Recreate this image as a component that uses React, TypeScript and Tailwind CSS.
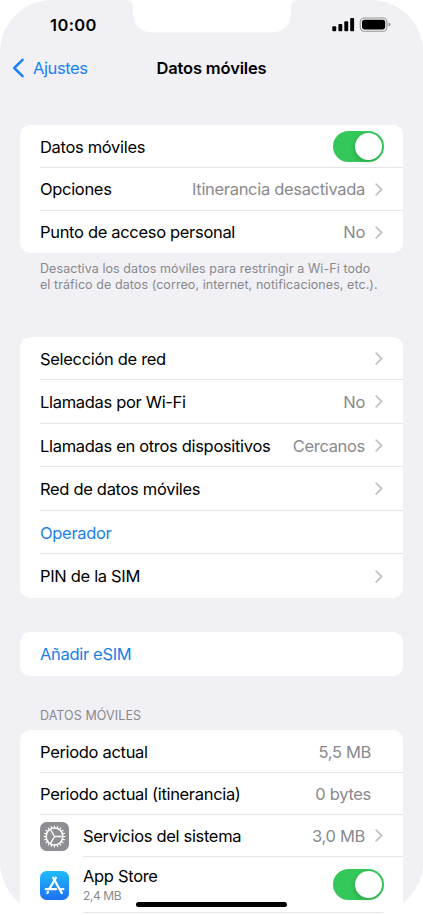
import type { ReactNode } from 'react';

function Chevron() {
  return (
    <svg width="8" height="13" viewBox="0 0 8 13" fill="none" className="ml-[10px] shrink-0">
      <path d="M1.2 1.2L6.6 6.5L1.2 11.8" stroke="#c4c4c7" strokeWidth="1.8" strokeLinecap="round" strokeLinejoin="round" />
    </svg>
  );
}

function Toggle() {
  return (
    <div className="flex h-[31px] w-[51px] shrink-0 items-center justify-end rounded-full bg-[#34c759] pr-[2px]">
      <div className="size-[27px] rounded-full bg-white shadow-[-1px_2px_4px_rgba(0,0,0,0.15)]" />
    </div>
  );
}

type RowProps = {
  label: string;
  value?: string;
  chevron?: boolean;
  link?: boolean;
  className?: string;
  children?: ReactNode;
};

function Row({ label, value, chevron, link, className = 'ml-5 h-[43px] border-b pr-5', children }: RowProps) {
  return (
    <div className={`flex items-center border-[#e6e6e8] ${className}`}>
      <span className={`grow whitespace-nowrap ${link ? 'text-[#1a7fe8]' : 'text-black'}`}>{label}</span>
      {value && <span className="whitespace-nowrap text-[#8a8a8e]">{value}</span>}
      {chevron && <Chevron />}
      {children}
    </div>
  );
}

function SettingsIcon() {
  const teeth = Array.from({ length: 20 }, (_, i) => i * 18);
  return (
    <svg width="29" height="29" viewBox="0 0 29 29" className="shrink-0">
      <rect width="29" height="29" rx="6.5" fill="#8e8e93" />
      <g stroke="#fff" fill="none" strokeLinecap="round">
        <circle cx="14.5" cy="14.5" r="8.4" strokeWidth="1.5" />
        {teeth.map((a) => (
          <path key={a} d="M14.5 5.6V4" strokeWidth="1.2" transform={`rotate(${a} 14.5 14.5)`} />
        ))}
        <path d="M14.5 14.5H22.6M14.5 14.5L10.4 7.4M14.5 14.5L10.4 21.6" strokeWidth="1.3" />
      </g>
    </svg>
  );
}

function AppStoreIcon() {
  return (
    <svg width="29" height="29" viewBox="0 0 29 29" className="shrink-0">
      <defs>
        <linearGradient id="store" x1="0" y1="0" x2="0" y2="1">
          <stop offset="0" stopColor="#1fbcfc" />
          <stop offset="1" stopColor="#1d6ff0" />
        </linearGradient>
      </defs>
      <rect width="29" height="29" rx="6.5" fill="url(#store)" />
      <g stroke="#fff" strokeWidth="2.3" strokeLinecap="round" fill="none">
        <path d="M15.8 6.8L9.3 18" />
        <path d="M13.2 6.8L21.7 22" />
        <path d="M5.8 18.2H16" />
        <path d="M20.3 18.2H23.3" />
        <path d="M8 21L7.4 22" />
      </g>
    </svg>
  );
}

export default function App() {
  return (
    <div className="relative h-[915px] w-[423px] overflow-hidden bg-white font-['Inter',sans-serif] text-[16.5px] leading-5 tracking-[-0.32px]">
      <div className="flex h-[914px] flex-col overflow-hidden rounded-[52px] bg-[#f1f0f5]">

        {/* Status bar */}
        <div className="flex h-[50px] shrink-0 items-center pr-8 pl-[50px]">
          <span className="grow font-semibold tracking-[0.4px]">10:00</span>
          <svg width="60" height="16" viewBox="0 0 60 16">
            <rect x="1.3" y="9.3" width="3.9" height="5" rx="1" />
            <rect x="7.4" y="7" width="3.9" height="7.3" rx="1" />
            <rect x="13.3" y="4.2" width="3.9" height="10.1" rx="1" />
            <rect x="19.2" y="1" width="3.9" height="13.3" rx="1" />
            <rect x="29.3" y="1" width="26.6" height="13.2" rx="4" fill="none" stroke="#97979a" strokeWidth="1.1" />
            <rect x="31" y="2.7" width="23.2" height="9.8" rx="2.4" />
            <path d="M57.5 5.6Q59.5 6 59.5 7.6Q59.5 9.2 57.5 9.6Z" fill="#97979a" />
          </svg>
        </div>

        {/* Navigation bar */}
        <div className="grid h-9 shrink-0 grid-cols-[1fr_auto_1fr] items-center">
          <div className="flex items-center text-[#1a82f7]">
            <svg width="14" height="20" viewBox="0 0 14 20" fill="none" className="ml-3">
              <path d="M10.6 1.9L2.2 10L10.6 18.1" stroke="currentColor" strokeWidth="2.5" strokeLinecap="round" strokeLinejoin="round" />
            </svg>
            <span className="ml-[7px] tracking-[-0.4px]">Ajustes</span>
          </div>
          <h1 className="font-semibold tracking-[-0.16px]">Datos móviles</h1>
        </div>

        {/* Mobile data */}
        <div className="mx-5 mt-[39px] h-[128px] shrink-0 rounded-[10px] bg-white">
          <Row label="Datos móviles" className="ml-5 h-[43px] border-b pt-px pr-[19px]">
            <Toggle />
          </Row>
          <Row label="Opciones" value="Itinerancia desactivada" chevron />
          <Row label="Punto de acceso personal" value="No" chevron className="ml-5 h-[42px] pr-5" />
        </div>
        <p className="mx-10 mt-2 h-8 shrink-0 text-[12.5px] leading-4 tracking-[0.075px] whitespace-nowrap text-[#88888d]">
          Desactiva los datos móviles para restringir a Wi-Fi todo
          <br />
          el tráfico de datos (correo, internet, notificaciones, etc.).
        </p>

        {/* Network */}
        <div className="mx-5 mt-11 h-[261px] shrink-0 rounded-[10px] bg-white">
          <Row label="Selección de red" chevron className="ml-5 h-[43px] border-b pt-px pr-5" />
          <Row label="Llamadas por Wi-Fi" value="No" chevron className="ml-5 h-11 border-b pr-5" />
          <Row label="Llamadas en otros dispositivos" value="Cercanos" chevron className="ml-5 h-[43px] border-b pt-px pr-5" />
          <Row label="Red de datos móviles" chevron className="ml-5 h-11 border-b pr-5" />
          <Row label="Operador" link className="ml-5 h-[43px] border-b pt-px pr-5" />
          <Row label="PIN de la SIM" chevron className="ml-5 h-11 pr-5" />
        </div>

        <div className="mx-5 mt-[34px] h-11 shrink-0 rounded-[10px] bg-white">
          <Row label="Añadir eSIM" link className="ml-5 h-11 pr-5" />
        </div>

        {/* Usage */}
        <h2 className="mx-10 mt-8 h-4 shrink-0 text-[12.5px] leading-4 tracking-[0.09px] text-[#88888d]">DATOS MÓVILES</h2>
        <div className="mx-5 mt-[6px] h-[200px] shrink-0 rounded-t-[10px] bg-white">
          <Row label="Periodo actual" value="5,5 MB" className="ml-5 h-[43px] border-b pt-px pr-8" />
          <Row label="Periodo actual (itinerancia)" value="0 bytes" className="ml-5 h-[42px] border-b pr-8" />
          <div className="ml-5 flex h-[42px] items-center">
            <SettingsIcon />
            <Row label="Servicios del sistema" value="3,0 MB" chevron className="ml-[14px] h-[42px] grow border-b pr-5" />
          </div>
          <div className="ml-5 flex h-14 items-center">
            <AppStoreIcon />
            <div className="ml-[14px] flex h-14 grow items-center border-b border-[#e6e6e8] pr-[19px]">
              <div className="flex grow flex-col gap-0.5">
                <span>App Store</span>
                <span className="text-[12px] leading-4 tracking-[-0.4px] text-[#8a8a8e]">2,4 MB</span>
              </div>
              <Toggle />
            </div>
          </div>
        </div>
      </div>

      {/* Notch and home indicator sit above the screen */}
      <svg width="170" height="34" viewBox="0 0 170 34" className="absolute top-0 left-[127px]">
        <path d="M0 0Q6 .5 6 6V12Q6 32.6 27 32.6H143Q164 32.6 164 12V6Q164 .5 170 0Z" fill="#fff" />
      </svg>
      <div className="absolute top-[902px] left-[136px] h-[5px] w-[151px] rounded-full bg-black" />
    </div>
  );
}
